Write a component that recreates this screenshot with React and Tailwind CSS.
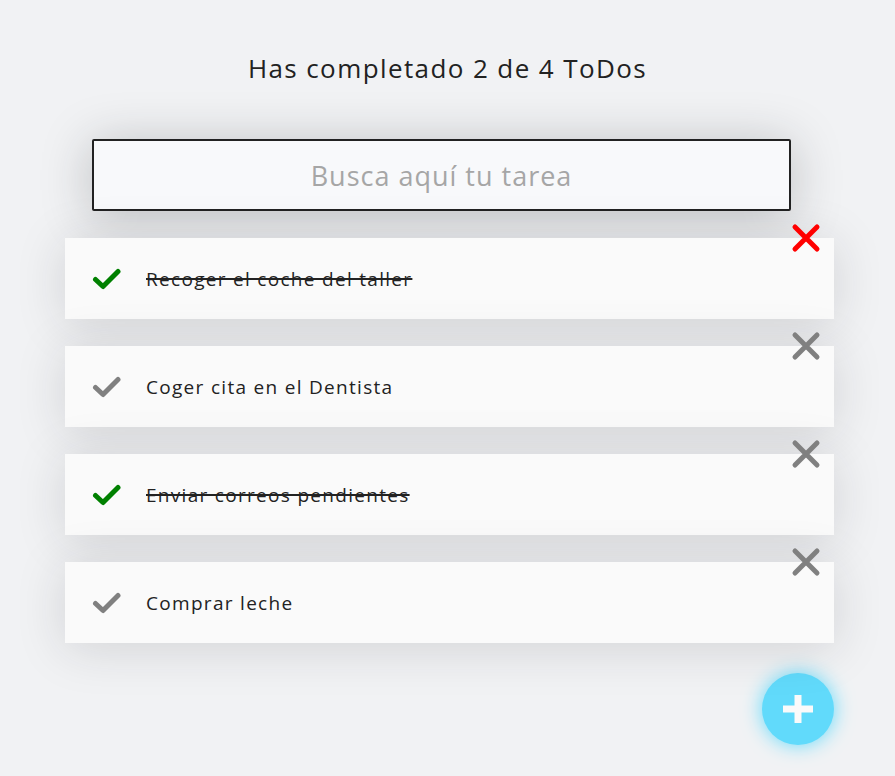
import React from 'react';

const todos = [
  { text: 'Recoger el coche del taller', completed: true, hot: true },
  { text: 'Coger cita en el Dentista', completed: false },
  { text: 'Enviar correos pendientes', completed: true },
  { text: 'Comprar leche', completed: false },
];

const CheckIcon = ({ color }) => (
  <svg width="30" height="22" viewBox="0 0 30 22" className="shrink-0">
    <polyline
      points="3.5,11.5 11,18.5 26,3.5"
      fill="none"
      stroke={color}
      strokeWidth="5"
      strokeLinecap="round"
      strokeLinejoin="round"
    />
  </svg>
);

const CloseIcon = ({ color }) => (
  <svg width="30" height="30" viewBox="0 0 30 30">
    <path
      d="M4 4 L26 26 M26 4 L4 26"
      fill="none"
      stroke={color}
      strokeWidth="5"
      strokeLinecap="round"
    />
  </svg>
);

const TodoItem = ({ text, completed, hot }) => (
  <li className="relative flex items-center h-[81px] bg-[#fafafa] shadow-[0_5px_50px_rgba(32,35,41,0.15)] pl-[27px]">
    <CheckIcon color={completed ? '#008000' : '#808080'} />
    <p
      className={`ml-[24px] mt-[1px] text-[19px] tracking-[1.3px] text-[#222] ${
        completed ? 'line-through decoration-[2px] decoration-[#222]' : ''
      }`}
    >
      {text}
    </p>
    <span className="absolute -top-[15px] right-[13px]">
      <CloseIcon color={hot ? '#ff0000' : '#808080'} />
    </span>
  </li>
);

export default function App() {
  return (
    <div
      className="min-h-[776px] bg-[#f1f2f4] pt-[49px]"
      style={{ fontFamily: '"Open Sans", sans-serif' }}
    >
      <h1 className="text-center text-[26px] tracking-[1.4px] text-[#222] leading-[38px]">
        Has completado 2 de 4 ToDos
      </h1>

      <div className="ml-[92px] mt-[52px] w-[699px]">
        <input
          className="w-full h-[72px] border-2 border-[#222] rounded-[2px] bg-[#f8f9fb] text-center text-[27px] tracking-[1px] text-[#222] placeholder:text-[#a6a6a6] shadow-[0_5px_50px_rgba(32,35,41,0.25)] outline-none"
          placeholder="Busca aquí tu tarea"
        />
      </div>

      <ul className="ml-[65px] mt-[27px] w-[769px] flex flex-col gap-[27px]">
        {todos.map((t) => (
          <TodoItem key={t.text} {...t} />
        ))}
      </ul>

      <div className="ml-[762px] mt-[30px] w-[72px] h-[72px] rounded-full bg-[#61dafb] shadow-[0_0_20px_#61dafb] flex items-center justify-center">
        <svg width="30" height="28" viewBox="0 0 30 28">
          <rect x="0" y="10.5" width="30" height="7" fill="#fafafa" />
          <rect x="11.5" y="0" width="7" height="28" fill="#fafafa" />
        </svg>
      </div>
    </div>
  );
}
